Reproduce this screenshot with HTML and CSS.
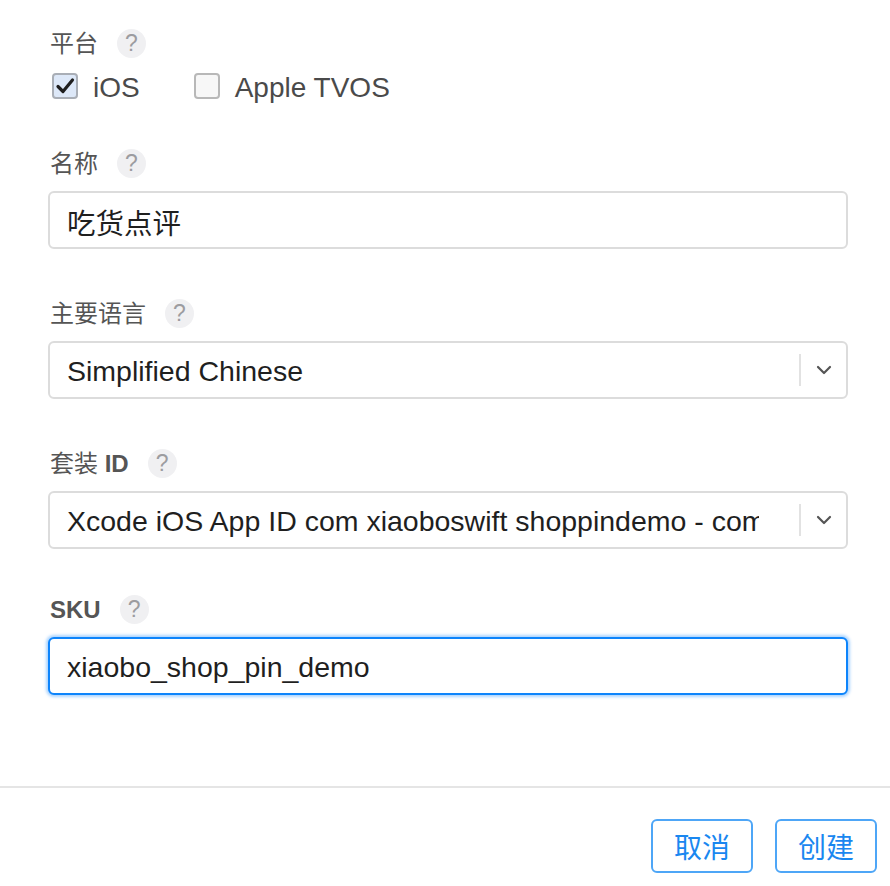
FILE: index.html
```html
<!DOCTYPE html>
<html lang="zh">
<head>
<meta charset="utf-8">
<link rel="stylesheet" href="styles.css">
</head>
<body>
<div class="dialog">
  <form class="form">
    <div class="field field-platform">
      <div class="label-row"><span class="label">平台</span><span class="help">?</span></div>
      <div class="checks">
        <label class="check">
          <span class="box checked"><svg width="22" height="22" viewBox="0 0 22 22"><path d="M4 11.5 L9 16.5 L18.5 5" fill="none" stroke="#1f1f1f" stroke-width="3.2" stroke-linecap="round" stroke-linejoin="round"/></svg></span>
          <span class="check-text">iOS</span>
        </label>
        <label class="check">
          <span class="box"></span>
          <span class="check-text">Apple TVOS</span>
        </label>
      </div>
    </div>

    <div class="field">
      <div class="label-row"><span class="label">名称</span><span class="help">?</span></div>
      <div class="input">吃货点评</div>
    </div>

    <div class="field">
      <div class="label-row"><span class="label">主要语言</span><span class="help">?</span></div>
      <div class="input select">
        <span class="select-text">Simplified Chinese</span>
        <span class="divider"></span>
        <span class="chevron"><svg width="16" height="10" viewBox="0 0 16 10"><path d="M2 2 L8 8 L14 2" fill="none" stroke="#555" stroke-width="2.2" stroke-linecap="round" stroke-linejoin="round"/></svg></span>
      </div>
    </div>

    <div class="field">
      <div class="label-row"><span class="label">套装 <b>ID</b></span><span class="help">?</span></div>
      <div class="input select">
        <span class="select-text">Xcode iOS App ID com xiaoboswift shoppindemo - com.xiaoboswift.shoppindemo</span>
        <span class="divider"></span>
        <span class="chevron"><svg width="16" height="10" viewBox="0 0 16 10"><path d="M2 2 L8 8 L14 2" fill="none" stroke="#555" stroke-width="2.2" stroke-linecap="round" stroke-linejoin="round"/></svg></span>
      </div>
    </div>

    <div class="field field-last">
      <div class="label-row"><span class="label"><b>SKU</b></span><span class="help">?</span></div>
      <div class="input focused">xiaobo_shop_pin_demo</div>
    </div>
  </form>
  <div class="footer">
    <button class="btn" type="button">取消</button>
    <button class="btn" type="button">创建</button>
  </div>
</div>
</body>
</html>
```

FILE: styles.css
```css
* { box-sizing: border-box; }
html, body {
  margin: 0;
  padding: 0;
  background: #fff;
}
body {
  font-family: "Liberation Sans", "Noto Sans CJK SC", sans-serif;
  width: 890px;
  height: 886px;
  overflow: hidden;
}
.form {
  padding: 27px 0 91px 48px;
  width: 848px;
}
.field { margin-top: 48px; }
.field-platform { margin-top: 0; }
.field-last { margin-top: 44px; }
.field-platform + .field { margin-top: 46px; }

.label-row {
  display: flex;
  align-items: center;
  height: 30px;
  margin-bottom: 14px;
  padding-left: 2px;
}
.label {
  font-size: 24px;
  color: #555;
  line-height: 30px;
  padding-top: 4px;
}
.label b { font-weight: bold; }
.help {
  width: 29px;
  height: 29px;
  border-radius: 50%;
  background: #f0f0f2;
  color: #9c9ca0;
  font-size: 23px;
  font-family: "Liberation Sans", sans-serif;
  font-weight: normal;
  display: flex;
  align-items: center;
  justify-content: center;
  margin-left: 19px;
  margin-top: 2px;
  line-height: 1;
}

.checks {
  display: flex;
  align-items: center;
  height: 30px;
  margin-top: 1px;
  padding-left: 4px;
  gap: 54px;
}
.check {
  display: flex;
  align-items: center;
  gap: 15px;
}
.box {
  width: 26px;
  height: 26px;
  border: 2px solid #b8b8b8;
  border-radius: 4px;
  background: #f7f7f7;
  display: flex;
  align-items: center;
  justify-content: center;
}
.box.checked {
  background: #dde8f8;
  border-color: #a9aeb6;
}
.check-text {
  font-size: 28px;
  color: #4a4a4a;
  padding-top: 3px;
}

.input {
  width: 800px;
  height: 58px;
  border: 2px solid #dcdcdc;
  border-radius: 6px;
  padding: 3px 16px 0 17px;
  font-size: 28.5px;
  color: #1f1f1f;
  display: flex;
  align-items: center;
  background: #fff;
}
.select { padding-right: 0; }
.select-text {
  flex: 1;
  white-space: nowrap;
  overflow: hidden;
  margin-right: 40px;
}
.divider {
  width: 2px;
  height: 32px;
  background: #e2e2e2;
  margin-top: -3px;
}
.chevron {
  width: 45px;
  display: flex;
  justify-content: center;
  align-items: center;
  padding-left: 1px;
  margin-top: -3px;
}
.focused {
  border-color: #0d84fb;
  box-shadow: 0 0 3px 2px rgba(13, 132, 251, 0.35);
}

.footer {
  border-top: 2px solid #e5e5e5;
  padding: 31px 13px 13px 0;
  display: flex;
  justify-content: flex-end;
  gap: 22px;
}
.btn {
  width: 102px;
  height: 54px;
  border: 2px solid #4ea6f7;
  border-radius: 6px;
  background: #fff;
  color: #1a87f0;
  font-family: "Liberation Sans", "Noto Sans CJK SC", sans-serif;
  font-size: 28px;
  padding: 0;
  display: flex;
  align-items: center;
  justify-content: center;
}
```
